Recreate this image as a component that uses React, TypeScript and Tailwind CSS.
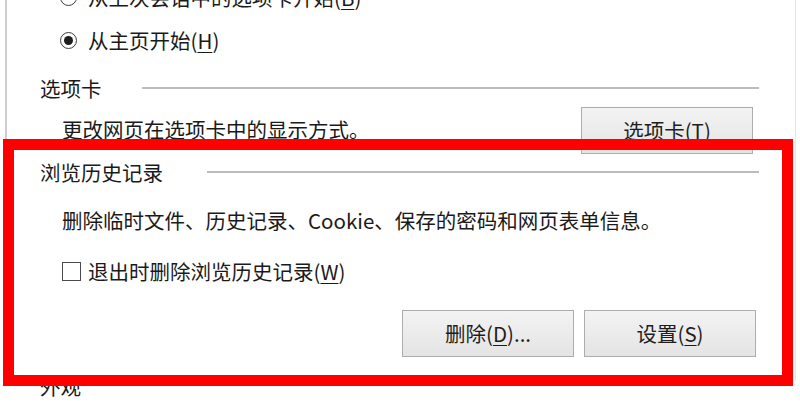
import { FC, ReactNode } from "react";

const font = {
  fontFamily: '"Noto Sans CJK SC", "Noto Sans", sans-serif',
};

const Key: FC<{ k: string }> = ({ k }) => (
  <>
    (<span className="underline underline-offset-[3px] decoration-1">{k}</span>)
  </>
);

const Radio: FC<{ checked?: boolean; children: ReactNode }> = ({ checked, children }) => (
  <div className="flex items-center pl-[20px]">
    <span className="w-[17px] h-[17px] rounded-full border-[1.5px] border-[#3c3c3c] flex items-center justify-center">
      {checked && <span className="w-[9px] h-[9px] rounded-full bg-[#1e1e1e]" />}
    </span>
    <span className="ml-[11px]">{children}</span>
  </div>
);

const Header: FC<{ label: string; gap: string }> = ({ label, gap }) => (
  <div className="flex items-center w-full">
    <span className="whitespace-nowrap">{label}</span>
    <div className={`flex-1 h-[2px] bg-[#bcbcbc] ${gap}`} />
  </div>
);

const Btn: FC<{ children: ReactNode; className?: string }> = ({ children, className }) => (
  <button
    className={`w-[172px] h-[47px] border border-[#adadad] bg-gradient-to-b from-[#f3f3f3] to-[#e4e4e4] text-[#1e1e1e] flex items-center justify-center ${className ?? ""}`}
  >
    {children}
  </button>
);

const App: FC = () => {
  return (
    <div
      className="relative w-[800px] h-[405px] overflow-hidden bg-white text-[20.5px] text-[#1a1a1a]"
      style={font}
    >
      <div className="ml-[5px] mr-[4px] h-full border-l-2 border-r border-l-[#cfcfcf] border-r-[#e6e6e6] pl-[33px] pr-[36px]">
        {/* 启动 */}
        <div className="h-[42px] mt-[-24px] flex items-center">
          <Radio>
            从上次会话中的选项卡开始<Key k="B" />
          </Radio>
        </div>
        <div className="h-[44px] flex items-center">
          <Radio checked>
            从主页开始<Key k="H" />
          </Radio>
        </div>

        {/* 选项卡 */}
        <div className="h-[45px] pt-[7px] flex items-center">
          <Header label="选项卡" gap="ml-[40px]" />
        </div>
        <div className="h-[47px] flex items-center justify-between">
          <span className="pl-[22px] pb-[3px]">更改网页在选项卡中的显示方式。</span>
          <Btn className="mr-[6px]">
            选项卡<Key k="T" />
          </Btn>
        </div>

        {/* 浏览历史记录 */}
        <div className="h-[36px] flex items-center">
          <Header label="浏览历史记录" gap="ml-[44px]" />
        </div>
        <div className="h-[60px] flex items-center pl-[22px]">
          删除临时文件、历史记录、Cookie、保存的密码和网页表单信息。
        </div>
        <div className="h-[42px] flex items-center pl-[22px]">
          <span className="w-[19px] h-[19px] border border-[#4a4a4a] bg-white" />
          <span className="ml-[7px]">
            退出时删除浏览历史记录<Key k="W" />
          </span>
        </div>
        <div className="mt-[18px] flex justify-end gap-[10px] pr-[3px]">
          <Btn>
            删除<Key k="D" />...
          </Btn>
          <Btn>
            设置<Key k="S" />
          </Btn>
        </div>

        {/* 外观 */}
        <div className="h-[58px] flex items-center">外观</div>
      </div>

      {/* red annotation frame */}
      <div className="absolute left-[3px] top-[139px] w-[790px] h-[247px] border-[11px] border-[#ff0000]" />
    </div>
  );
};

export default App;
